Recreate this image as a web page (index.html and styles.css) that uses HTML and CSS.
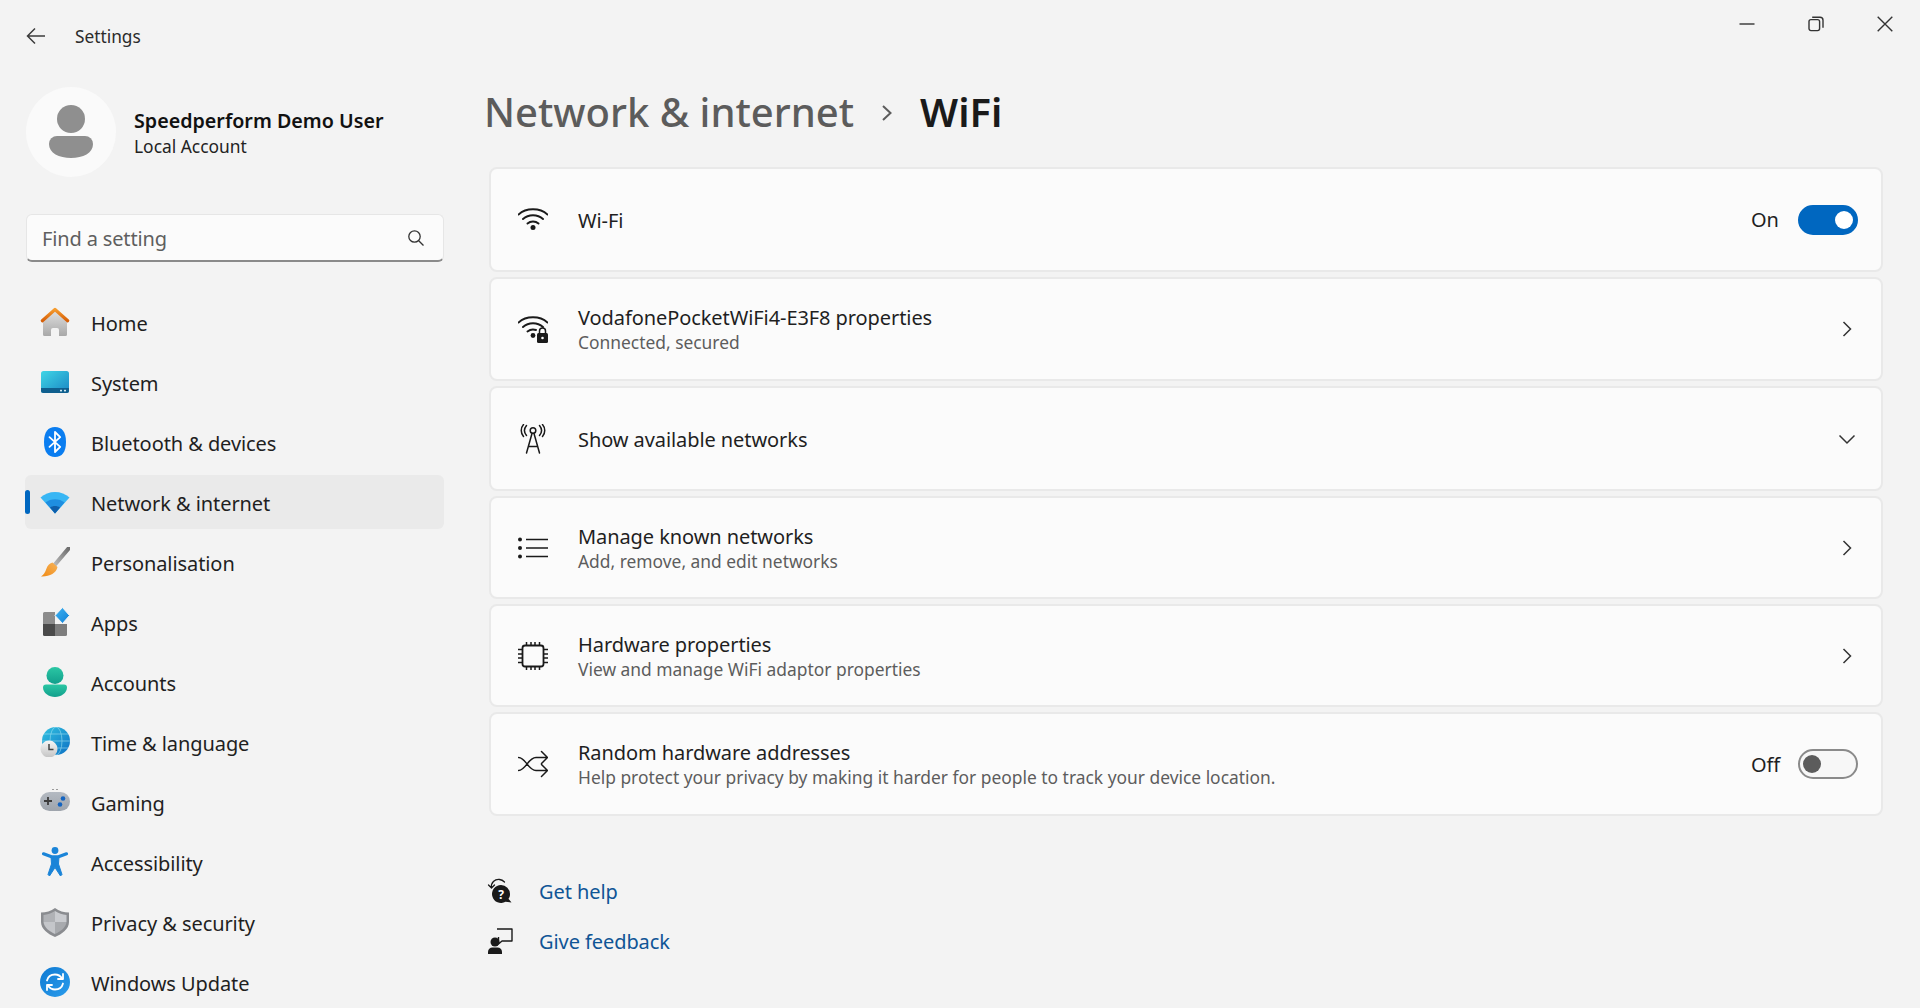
FILE: index.html
```html
<!DOCTYPE html>
<html lang="en">
<head>
<meta charset="utf-8">
<title>Settings</title>
<link rel="stylesheet" href="styles.css">
</head>
<body>
<svg class="defs" width="0" height="0" aria-hidden="true">
  <defs>
    <linearGradient id="gRoof" x1="0" y1="0" x2="0" y2="1"><stop offset="0" stop-color="#f59a2c"/><stop offset="1" stop-color="#d65f08"/></linearGradient>
    <linearGradient id="gHouse" x1="0" y1="0" x2="0" y2="1"><stop offset="0" stop-color="#e2e2e2"/><stop offset="1" stop-color="#a8a8a8"/></linearGradient>
    <linearGradient id="gSys" x1="0" y1="0" x2="1" y2="1"><stop offset="0" stop-color="#3fd6e6"/><stop offset="1" stop-color="#1a86c4"/></linearGradient>
    <linearGradient id="gBrush" x1="0" y1="1" x2="1" y2="0"><stop offset="0" stop-color="#b8b8b8"/><stop offset="1" stop-color="#6e6e6e"/></linearGradient>
    <linearGradient id="gBristle" x1="0" y1="1" x2="1" y2="0"><stop offset="0" stop-color="#f08a14"/><stop offset="1" stop-color="#f6b35a"/></linearGradient>
    <linearGradient id="gDiamond" x1="0" y1="0" x2="1" y2="1"><stop offset="0" stop-color="#3fb4f2"/><stop offset="1" stop-color="#0f7fd6"/></linearGradient>
    <linearGradient id="gTeal" x1="0" y1="0" x2="0" y2="1"><stop offset="0" stop-color="#2bc7a4"/><stop offset="1" stop-color="#119f8c"/></linearGradient>
    <linearGradient id="gGlobe" x1="0" y1="0" x2="1" y2="1"><stop offset="0" stop-color="#33c3e0"/><stop offset="1" stop-color="#0c6fc4"/></linearGradient>
    <linearGradient id="gClock" x1="0" y1="0" x2="0" y2="1"><stop offset="0" stop-color="#f6f6f6"/><stop offset="1" stop-color="#c4c4c4"/></linearGradient>
    <linearGradient id="gPad" x1="0" y1="0" x2="0" y2="1"><stop offset="0" stop-color="#b4bac2"/><stop offset="1" stop-color="#9ea4ac"/></linearGradient>
    <linearGradient id="gUpd" x1="0" y1="0" x2="1" y2="1"><stop offset="0" stop-color="#0f7ad2"/><stop offset="1" stop-color="#2a9cec"/></linearGradient>
  </defs>
</svg>
<div class="window">
  <header class="titlebar">
    <div class="title-left">
      <svg class="back" width="20" height="18" viewBox="0 0 20 18" fill="none" stroke="#3c3c3c" stroke-width="1.5"><path d="M19 9H1.500M9 1.500 1.500 9 9 16.500"/></svg>
      <span class="app-name">Settings</span>
    </div>
    <div class="win-controls">
      <svg width="16" height="16" viewBox="0 0 16 16" fill="none" stroke="#333" stroke-width="1.4"><path d="M0.500 8H15.500"/></svg>
      <svg width="16" height="16" viewBox="0 0 16 16" fill="none" stroke="#333" stroke-width="1.4"><rect x="1" y="3.600" width="10.600" height="11" rx="2"/><path d="M4.200 1.200H12a3 3 0 0 1 3 3v7.600"/></svg>
      <svg width="16" height="16" viewBox="0 0 16 16" fill="none" stroke="#333" stroke-width="1.4"><path d="M0.700 0.700 15.300 15.300M15.300 0.700 0.700 15.300"/></svg>
    </div>
  </header>
  <div class="content">
    <aside class="sidebar">
      <div class="profile">
        <div class="avatar">
          <svg width="44" height="54" viewBox="0 0 44 54"><circle cx="22" cy="14" r="14" fill="#8f8f8f"/><path d="M8 31H36a8 8 0 0 1 8 8c0 9-10 14-22 14S0 48 0 39a8 8 0 0 1 8-8z" fill="#8f8f8f"/></svg>
        </div>
        <div class="profile-text">
          <div class="profile-name">Speedperform Demo User</div>
          <div class="profile-sub">Local Account</div>
        </div>
      </div>
      <div class="search">
        <span class="search-text">Find a setting</span>
        <svg width="18" height="18" viewBox="0 0 18 18" fill="none" stroke="#333" stroke-width="1.3"><circle cx="7.500" cy="7.500" r="5.700"/><path d="M11.700 11.700 16.500 16.500"/></svg>
      </div>
      <nav class="nav">
        <a class="nav-item">
          <svg class="nav-icon" viewBox="0 0 30 30"><path d="M3 13 15 3 27 13V27.500a1.500 1.500 0 0 1-1.500 1.500H19V23a2 2 0 0 0-2-2H13a2 2 0 0 0-2 2V29H4.500A1.500 1.500 0 0 1 3 27.500z" fill="url(#gHouse)"/><path d="M2.300 13.800 15 2.500 27.700 13.800" fill="none" stroke="url(#gRoof)" stroke-width="3.200" stroke-linecap="round" stroke-linejoin="round"/></svg>
          <span>Home</span>
        </a>
        <a class="nav-item">
          <svg class="nav-icon" viewBox="0 0 30 30"><rect x="1" y="4" width="28" height="22" rx="2.500" fill="url(#gSys)"/><path d="M1 21H29V23.500A2.500 2.500 0 0 1 26.500 26H3.500A2.500 2.500 0 0 1 1 23.500z" fill="#0f5f8e"/><rect x="20" y="22.800" width="2" height="1.600" fill="#cfe8f2"/><rect x="24" y="22.800" width="2" height="1.600" fill="#cfe8f2"/></svg>
          <span>System</span>
        </a>
        <a class="nav-item">
          <svg class="nav-icon" viewBox="0 0 30 30"><path d="M15 0C22 0 26 5 26 15S22 30 15 30 4 25 4 15 8 0 15 0z" fill="#0a7df0"/><path d="M9.500 10.200 20.200 19.800 15 25V5L20.200 10.200 9.500 19.800" fill="none" stroke="#fff" stroke-width="1.800" stroke-linejoin="round" stroke-linecap="round"/></svg>
          <span>Bluetooth &amp; devices</span>
        </a>
        <a class="nav-item is-active">
          <svg class="nav-icon" viewBox="0 0 30 30"><path d="M0.500 10.500C8 3 22 3 29.500 10.500L15 26.500z" fill="#38b6f4"/><path d="M5.500 15.500C10.500 11 19.500 11 24.500 15.500L15 26.500z" fill="#1f8ee0"/><path d="M10 20.500C13 18.500 17 18.500 20 20.500L15 26.500z" fill="#0f5eaa"/></svg>
          <span>Network &amp; internet</span>
        </a>
        <a class="nav-item">
          <svg class="nav-icon" viewBox="0 0 30 30"><path d="M28.500 1.500 15 17.500" fill="none" stroke="url(#gBrush)" stroke-width="4.200" stroke-linecap="round"/><path d="M12.500 15.500 17.500 20C16.500 26 9 30 1 29.500 4 27.500 5 25.500 6.500 21.500 7.500 18 10 16 12.500 15.500z" fill="url(#gBristle)"/></svg>
          <span>Personalisation</span>
        </a>
        <a class="nav-item">
          <svg class="nav-icon" viewBox="0 0 30 30"><path d="M3 6.500A1.500 1.500 0 0 1 4.500 5H15V17H3z" fill="#8c8c8c"/><path d="M3 17H15V29H4.500A1.500 1.500 0 0 1 3 27.500z" fill="#4a4a4a"/><path d="M15 17H27V27.500A1.500 1.500 0 0 1 25.500 29H15z" fill="#7d7d7d"/><path d="M22.500 0.500 29.500 8.500 22.500 16.500 15 8.500z" fill="url(#gDiamond)" stroke="#f3f3f3" stroke-width="1"/></svg>
          <span>Apps</span>
        </a>
        <a class="nav-item">
          <svg class="nav-icon" viewBox="0 0 30 30"><circle cx="15" cy="8.500" r="8.500" fill="url(#gTeal)"/><path d="M6 17.500H24A3 3 0 0 1 27 20.500C27 26 21 30 15 30S3 26 3 20.500A3 3 0 0 1 6 17.500z" fill="url(#gTeal)"/></svg>
          <span>Accounts</span>
        </a>
        <a class="nav-item">
          <svg class="nav-icon" viewBox="0 0 30 30"><circle cx="16" cy="14" r="14" fill="url(#gGlobe)"/><g fill="none" stroke="#a6e4f4" stroke-width="0.800" opacity="0.700"><ellipse cx="16" cy="14" rx="6" ry="14"/><path d="M2 14H30M4 7H28M4 21H28"/></g><circle cx="9" cy="22" r="8.500" fill="url(#gClock)"/><path d="M9 17V22.500H13.500" fill="none" stroke="#444" stroke-width="1.500"/></svg>
          <span>Time &amp; language</span>
        </a>
        <a class="nav-item">
          <svg class="nav-icon" viewBox="0 0 30 30"><rect x="0" y="5" width="30" height="19" rx="9.500" fill="url(#gPad)"/><path d="M8 10V18M4 14H12" stroke="#3c3c3c" stroke-width="1.800"/><circle cx="23" cy="11.500" r="2.300" fill="#1464c0"/><circle cx="20" cy="17.500" r="2.300" fill="#1464c0"/><path d="M12 2.500H14M16 2.500H18" stroke="#9a9a9a" stroke-width="1"/></svg>
          <span>Gaming</span>
        </a>
        <a class="nav-item">
          <svg class="nav-icon" viewBox="0 0 30 30"><circle cx="15" cy="3.500" r="3.400" fill="#1a84d8"/><path d="M3.500 6.800 11.500 9.800H18.500L26.500 6.800" fill="none" stroke="#1a84d8" stroke-width="3.200" stroke-linecap="round" stroke-linejoin="round"/><path d="M11 9.500H19L18.500 17 22 27.500 20.500 29 15 20.500 9.500 29 8 27.500 11.500 17z" fill="#1a84d8" stroke="#1a84d8" stroke-width="1" stroke-linejoin="round"/></svg>
          <span>Accessibility</span>
        </a>
        <a class="nav-item">
          <svg class="nav-icon" viewBox="0 0 30 30"><path d="M15 1C19 4 24 5.500 29 5.500V15C29 22 22 27 15 30 8 27 1 22 1 15V5.500C6 5.500 11 4 15 1z" fill="#8a8c90"/><path d="M15 4C18.500 6.300 22.500 7.600 26.500 8V15H15z" fill="#c9cbcf"/><path d="M15 4C11.500 6.300 7.500 7.600 3.500 8V15H15z" fill="#b0b2b6"/><path d="M15 15H26.500C26 20.500 20.500 24.500 15 27z" fill="#a8aaae"/><path d="M15 15H3.500C4 20.500 9.500 24.500 15 27z" fill="#c4c6ca"/></svg>
          <span>Privacy &amp; security</span>
        </a>
        <a class="nav-item">
          <svg class="nav-icon" viewBox="0 0 30 30"><circle cx="15" cy="15" r="15" fill="url(#gUpd)"/><path d="M7 13.500C8 9.500 11.500 7.500 15 7.500 18 7.500 20.500 9 22 11.500M23 16.500C22 20.500 18.500 22.500 15 22.500 12 22.500 9.500 21 8 18.500" fill="none" stroke="#fff" stroke-width="1.800" stroke-linecap="round"/><path d="M23 7V12H18M7 23V18H12" fill="none" stroke="#fff" stroke-width="1.800" stroke-linecap="round" stroke-linejoin="round"/></svg>
          <span>Windows Update</span>
        </a>
      </nav>
    </aside>
    <main class="main">
      <h1 class="crumbs">
        <span class="crumb-parent">Network &amp; internet</span>
        <svg class="crumb-sep" width="12" height="18" viewBox="0 0 12 18" fill="none" stroke="#5c5c5c" stroke-width="2"><path d="M2 2 9.500 9 2 16"/></svg>
        <span class="crumb-current">WiFi</span>
      </h1>
      <section class="cards">
        <div class="card">
          <svg class="row-icon" viewBox="0 0 30 30" fill="none" stroke="#1a1a1a" stroke-width="1.900" stroke-linecap="round"><path d="M0.500 9.500C8 2.500 22 2.500 29.500 9.500M5 14C10.500 9 19.500 9 25 14M9.500 18.500C12.500 15.800 17.500 15.800 20.500 18.500"/><circle cx="15" cy="22.500" r="2.500" fill="#1a1a1a" stroke="none"/></svg>
          <div class="row-text"><div class="row-title">Wi-Fi</div></div>
          <span class="state">On</span>
          <span class="toggle is-on"><span class="thumb"></span></span>
        </div>
        <div class="card">
          <svg class="row-icon" viewBox="0 0 30 30" fill="none" stroke="#1a1a1a" stroke-width="1.900" stroke-linecap="round"><path d="M0.500 8.500C8 1.500 22 1.500 29.500 8.500M5 13C10.500 8 19.500 8 25 13M9.500 17.500C12 15.500 15 15 18 16"/><circle cx="15" cy="21.500" r="2.400" fill="#1a1a1a" stroke="none"/><rect x="19" y="19" width="11" height="10" rx="1.500" fill="#1a1a1a" stroke="none"/><path d="M21.500 19.500V17a3 3 0 0 1 6 0V19.500" stroke-width="1.500"/><circle cx="24.500" cy="24" r="1.300" fill="#fbfbfb" stroke="none"/></svg>
          <div class="row-text"><div class="row-title">VodafonePocketWiFi4-E3F8 properties</div><div class="row-sub">Connected, secured</div></div>
          <svg class="chev" width="12" height="18" viewBox="0 0 12 18" fill="none" stroke="#333" stroke-width="1.500"><path d="M2.500 2 9.500 9 2.500 16"/></svg>
        </div>
        <div class="card">
          <svg class="row-icon" viewBox="0 0 30 30" fill="none" stroke="#1a1a1a" stroke-width="1.500" stroke-linecap="round"><circle cx="15" cy="6.500" r="2.800"/><path d="M14 9.500 8.500 29M16 9.500 21.500 29M10.500 22.500H19.500"/><path d="M8.500 1.500C6 4.500 6 8.500 8.500 11.500M21.500 1.500C24 4.500 24 8.500 21.500 11.500M5.500 0.500C2.500 4 2.500 9 5.500 12.500M24.500 0.500C27.500 4 27.500 9 24.500 12.500"/></svg>
          <div class="row-text"><div class="row-title">Show available networks</div></div>
          <svg class="chev chev-down" width="18" height="12" viewBox="0 0 18 12" fill="none" stroke="#333" stroke-width="1.500"><path d="M1.500 2.500 9 10 16.500 2.500"/></svg>
        </div>
        <div class="card">
          <svg class="row-icon" viewBox="0 0 30 30" fill="none" stroke="#1a1a1a" stroke-width="1.500"><path d="M8 6.500H30M8 15H30M8 23.500H30"/><g fill="#1a1a1a" stroke="none"><circle cx="2" cy="6.500" r="2"/><circle cx="2" cy="15" r="2"/><circle cx="2" cy="23.500" r="2"/></g></svg>
          <div class="row-text"><div class="row-title">Manage known networks</div><div class="row-sub">Add, remove, and edit networks</div></div>
          <svg class="chev" width="12" height="18" viewBox="0 0 12 18" fill="none" stroke="#333" stroke-width="1.500"><path d="M2.500 2 9.500 9 2.500 16"/></svg>
        </div>
        <div class="card">
          <svg class="row-icon" viewBox="0 0 30 30" fill="none" stroke="#1a1a1a" stroke-width="1.500"><rect x="4.500" y="4.500" width="21" height="21" rx="2.500" stroke-width="1.800"/><path d="M8.500 1V4.500M13 1V4.500M17 1V4.500M21.500 1V4.500M8.500 25.500V29M13 25.500V29M17 25.500V29M21.500 25.500V29M0 8.500H4.500M0 13H4.500M0 17H4.500M0 21.500H4.500M25.500 8.500H30M25.500 13H30M25.500 17H30M25.500 21.500H30"/></svg>
          <div class="row-text"><div class="row-title">Hardware properties</div><div class="row-sub">View and manage WiFi adaptor properties</div></div>
          <svg class="chev" width="12" height="18" viewBox="0 0 12 18" fill="none" stroke="#333" stroke-width="1.500"><path d="M2.500 2 9.500 9 2.500 16"/></svg>
        </div>
        <div class="card">
          <svg class="row-icon" viewBox="0 0 30 30" fill="none" stroke="#1a1a1a" stroke-width="1.500" stroke-linecap="round" stroke-linejoin="round"><path d="M0.500 8.500C8 8.500 10 21.500 18 21.500H29.500M0.500 21.500C8 21.500 10 8.500 18 8.500H29.500M23.500 2.500 29.500 8.500 23.500 14.500M23.500 15.500 29.500 21.500 23.500 27.500"/></svg>
          <div class="row-text"><div class="row-title">Random hardware addresses</div><div class="row-sub">Help protect your privacy by making it harder for people to track your device location.</div></div>
          <span class="state">Off</span>
          <span class="toggle"><span class="thumb"></span></span>
        </div>
      </section>
      <div class="links">
        <a class="link">
          <svg class="link-icon" viewBox="0 0 26 26"><path d="M14 7A9 9 0 0 1 23 16C23 18 22.500 19.500 21.500 20.800L24.500 24.500 18.500 23.800A9 9 0 1 1 14 7z" fill="#1a1a1a"/><path d="M4.500 10C3.500 4.500 8 1 12.500 1.500 14.500 1.700 16 2.500 17.500 4M4.500 10 1.500 7M4.500 10 7.500 7" fill="none" stroke="#1a1a1a" stroke-width="1.300" stroke-linecap="round"/><text class="q-mark" x="14" y="20.500" text-anchor="middle">?</text></svg>
          <span>Get help</span>
        </a>
        <a class="link">
          <svg class="link-icon" viewBox="0 0 26 26"><circle cx="8" cy="14" r="4.500" fill="#1a1a1a"/><path d="M1 26V24C1 21 3 19.500 5.500 19.500H10.500C13 19.500 15 21 15 24V26z" fill="#1a1a1a"/><path d="M10 1H25V13H15L11.500 16V9" fill="none" stroke="#1a1a1a" stroke-width="1.400" stroke-linejoin="round"/></svg>
          <span>Give feedback</span>
        </a>
      </div>
    </main>
  </div>
</div>
</body>
</html>
```
FILE: styles.css
```css
* { box-sizing: border-box; }
html, body { margin: 0; height: 100%; }
body {
  background: #f3f3f3;
  color: #1b1b1b;
  font-family: "Noto Sans", "Open Sans", sans-serif;
  font-size: 20px;
  letter-spacing: -0.08px;
  overflow: hidden;
}
.defs { display: block; height: 0; }
.window { height: 1008px; display: flex; flex-direction: column; overflow: hidden; }

.titlebar {
  height: 72px;
  flex: none;
  display: flex;
  justify-content: space-between;
  padding: 0 27px 0 26px;
}
.title-left { display: flex; align-items: center; height: 72px; }
.back { margin-right: 29px; }
.app-name { font-size: 17.3px; color: #2b2b2b; letter-spacing: 0; }
.win-controls { display: flex; gap: 53px; padding-top: 16px; }

.content { flex: 1; display: flex; min-height: 0; }
.sidebar { width: 486px; flex: none; padding: 15px 0 0 25px; }

.profile { display: flex; align-items: center; padding-left: 1px; height: 90px; }
.avatar {
  width: 90px; height: 90px; border-radius: 50%;
  background: #fafafa;
  display: flex; align-items: center; justify-content: center;
  margin-right: 18px;
}
.profile-text { padding-top: 2px; }
.profile-name { font-size: 19.7px; font-weight: 600; color: #111; line-height: 26px; letter-spacing: 0; }
.profile-sub { font-size: 17.4px; line-height: 24px; color: #222; letter-spacing: 0; }

.search {
  width: 418px; height: 48px;
  margin: 37px 0 33px 1px;
  display: flex; align-items: center; justify-content: space-between;
  padding: 0 18px 0 15px;
  background: #fbfbfb;
  border: 1px solid #e6e6e6;
  border-bottom: 2px solid #8a8a8a;
  border-radius: 6px;
}
.search-text { color: #5f5f5f; font-size: 20px; letter-spacing: -0.15px; padding-top: 1px; }

.nav { display: flex; flex-direction: column; gap: 6px; width: 419px; }
.nav-item {
  position: relative;
  height: 54px;
  display: flex; align-items: center;
  padding-left: 15px;
  border-radius: 6px;
  color: #1f1f1f;
}
.nav-item span { padding-top: 2px; }
.nav-icon { width: 30px; height: 30px; margin-right: 21px; flex: none; }
.is-active { background: #eaeaea; }
.is-active::before {
  content: "";
  position: absolute; left: 0; top: 15px;
  width: 5px; height: 24px;
  border-radius: 3px;
  background: #0067c0;
}

.main { flex: 1; padding-right: 37px; min-width: 0; }
.crumbs {
  margin: 0 0 0 -2px; height: 95px;
  display: flex; align-items: flex-start;
  font-size: 40px; font-weight: 500; line-height: 80px; letter-spacing: 0;
}
.crumb-parent { color: #5c5c5c; }
.crumb-sep { margin: 32px 27px 0 27px; flex: none; }
.crumb-current { color: #1a1a1a; font-weight: 600; }

.cards {
  margin-left: 3px;
  display: grid;
  grid-template-rows: 105px 104px 105px 103px 103px 104px;
  gap: 5px;
}
.card {
  display: flex; align-items: center;
  background: #fbfbfb;
  border: 2px solid #e9e9e9;
  border-radius: 8px;
  padding: 0 23px 0 27px;
}
.row-icon { width: 30px; height: 30px; flex: none; margin-right: 30px; }
.row-text { flex: 1; min-width: 0; padding-top: 2px; }
.row-title { line-height: 25px; color: #1f1f1f; }
.row-sub { font-size: 17.4px; line-height: 25px; color: #5d5d5d; letter-spacing: 0; }
.state { margin-right: 19px; width: 28px; color: #1f1f1f; }
.chev { margin-right: 5px; flex: none; }
.chev-down { margin-right: 2px; }

.toggle {
  width: 60px; height: 30px;
  border-radius: 15px;
  border: 2px solid #8a8a8a;
  background: #f7f7f7;
  display: flex; align-items: center;
  padding-left: 3px;
  flex: none;
}
.thumb { width: 18px; height: 18px; border-radius: 50%; background: #5c5c5c; }
.toggle.is-on { background: #0067c0; border-color: #0067c0; justify-content: flex-end; padding: 0 3px 0 0; }
.toggle.is-on .thumb { background: #fff; }

.links { margin-left: 3px; padding-top: 60px; display: flex; flex-direction: column; gap: 20px; }
.link { display: flex; align-items: center; height: 30px; color: #0f5596; }
.link-icon { width: 26px; height: 26px; margin-right: 26px; flex: none; margin-left: -2px; }
.q-mark { font-size: 12px; font-weight: 700; fill: #fff; font-family: "Noto Sans", sans-serif; }
```
